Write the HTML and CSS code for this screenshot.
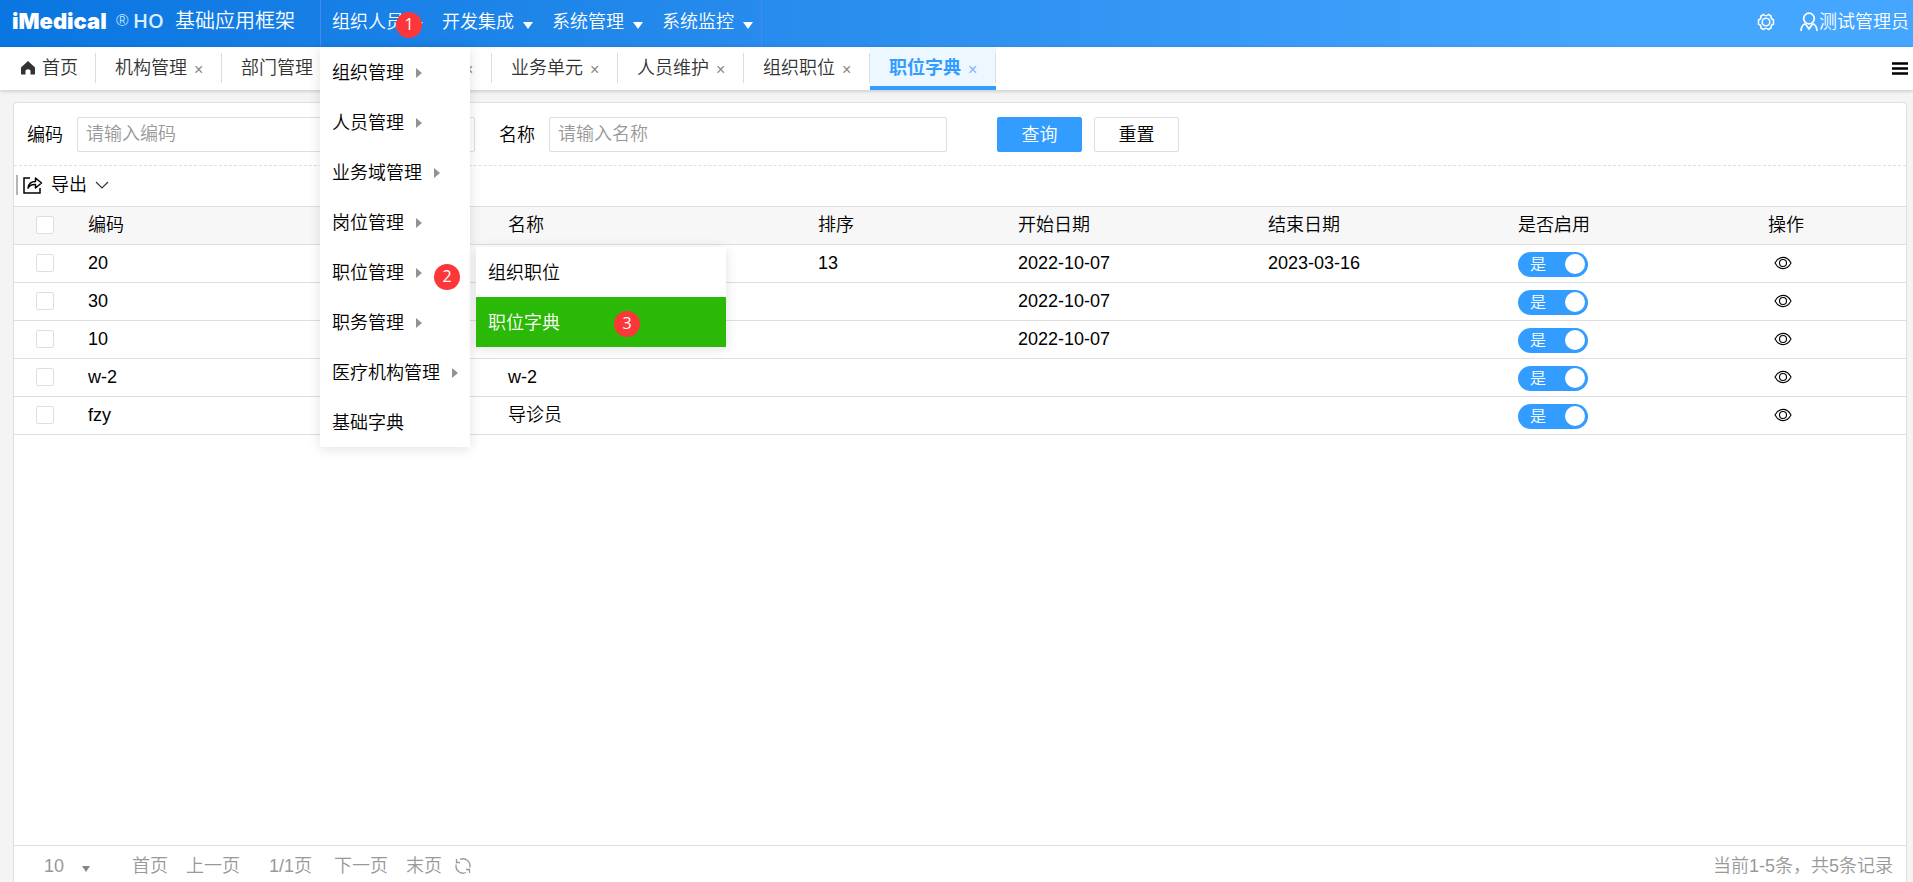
FILE: index.html
```html
<!DOCTYPE html>
<html lang="zh-CN">
<head>
<meta charset="utf-8">
<title>基础应用框架</title>
<link rel="stylesheet" href="styles.css">
</head>
<body>
<svg class="sprite" aria-hidden="true">
  <symbol id="eye" viewBox="0 0 18 16">
    <path d="M1 8C5 .5 13 .5 17 8C13 15.500 5 15.500 1 8Z" fill="none" stroke="currentColor" stroke-width="1.100"/>
    <circle cx="9" cy="8" r="3.500" fill="none" stroke="currentColor" stroke-width="1.100"/>
  </symbol>
</svg>
<header class="topbar">
  <div class="brand">
    <span class="brand-name">iMedical</span><span class="brand-mark">®</span><span class="brand-ho">HO</span>
    <span class="brand-title">基础应用框架</span>
  </div>
  <nav class="main-menu">
    <div class="main-item">
      <button type="button" class="main-link">组织人员<span class="caret"></span></button>
      <span class="badge badge-one">1</span>
      <ul class="drop">
        <li><a href="#">组织管理<span class="arrow"></span></a></li>
        <li><a href="#">人员管理<span class="arrow"></span></a></li>
        <li><a href="#">业务域管理<span class="arrow"></span></a></li>
        <li><a href="#">岗位管理<span class="arrow"></span></a></li>
        <li class="open"><a href="#">职位管理<span class="arrow"></span></a>
          <span class="badge badge-two">2</span>
          <ul class="subdrop">
            <li><a href="#">组织职位</a></li>
            <li><a href="#" class="chosen">职位字典</a><span class="badge badge-three">3</span></li>
          </ul>
        </li>
        <li><a href="#">职务管理<span class="arrow"></span></a></li>
        <li><a href="#">医疗机构管理<span class="arrow"></span></a></li>
        <li><a href="#">基础字典</a></li>
      </ul>
    </div>
    <div class="main-item"><button type="button" class="main-link">开发集成<span class="caret"></span></button></div>
    <div class="main-item"><button type="button" class="main-link">系统管理<span class="caret"></span></button></div>
    <div class="main-item"><button type="button" class="main-link">系统监控<span class="caret"></span></button></div>
  </nav>
  <div class="account">
    <button type="button" class="plain" aria-label="设置">
      <svg width="18" height="18" viewBox="0 0 18 18" fill="none" stroke="currentColor" stroke-width="1.500"><path d="M6.500 1.500Q9 4 11.500 1.500L14 3Q13.500 6 16.500 7V11Q13.500 12 14 15L11.500 16.500Q9 14 6.500 16.500L4 15Q4.500 12 1.500 11V7Q4.500 6 4 3Z"/><circle cx="9" cy="9" r="3.800"/></svg>
    </button>
    <button type="button" class="plain user">
      <svg width="18" height="20" viewBox="0 0 18 20" fill="none" stroke="currentColor" stroke-width="1.700"><circle cx="9" cy="6.500" r="5.300"/><path d="M1 19Q1 13.500 5.500 11.500M17 19Q17 13.500 12.500 11.500M5.500 12L9 17L12.500 12"/></svg>
      <span>测试管理员</span>
    </button>
  </div>
</header>
<nav class="tabs">
  <a href="#" class="tab home"><svg width="14" height="14" viewBox="0 0 14 14"><path d="M7 0L0 6.500V13.500H4.500V9.500Q7 7 9.500 9.500V13.500H14V6.500Z" fill="#333"/></svg>首页</a>
  <a href="#" class="tab">机构管理<span class="close">×</span></a>
  <a href="#" class="tab">部门管理<span class="close">×</span></a>
  <a href="#" class="tab">组织业务域<span class="close">×</span></a>
  <a href="#" class="tab">业务单元<span class="close">×</span></a>
  <a href="#" class="tab">人员维护<span class="close">×</span></a>
  <a href="#" class="tab">组织职位<span class="close">×</span></a>
  <a href="#" class="tab active">职位字典<span class="close">×</span></a>
  <button type="button" class="plain burger" aria-label="标签列表"><svg width="16" height="14" viewBox="0 0 16 14"><path d="M0 1.500H16M0 6.500H16M0 11.500H16" stroke="#000" stroke-width="2.500"/></svg></button>
</nav>
<main class="panel">
  <form class="search">
    <label for="code">编码</label>
    <input id="code" class="field" type="text" placeholder="请输入编码">
    <label for="name" class="second">名称</label>
    <input id="name" class="field" type="text" placeholder="请输入名称">
    <button type="button" class="btn primary">查询</button>
    <button type="button" class="btn">重置</button>
  </form>
  <div class="toolbar">
    <button type="button" class="plain export">
      <svg width="20" height="18" viewBox="0 0 20 18" fill="none" stroke="#000" stroke-width="1.500"><path d="M7 2H1V17H17V12"/><path d="M5 12Q6 5.500 12.500 5.500V2L18.500 7L12.500 12V8.500Q7.500 8 5 12Z" stroke-linejoin="round"/></svg>
      导出
      <svg width="14" height="8" viewBox="0 0 14 8" fill="none" stroke="#333" stroke-width="1.200"><path d="M1 1L7 7L13 1"/></svg>
    </button>
  </div>
  <table class="grid">
    <colgroup><col class="c-check"><col class="c-code"><col class="c-name"><col class="c-sort"><col class="c-date"><col class="c-date"><col class="c-date"><col></colgroup>
    <thead>
      <tr><th><input type="checkbox" class="check" aria-label="全选"></th><th>编码</th><th>名称</th><th>排序</th><th>开始日期</th><th>结束日期</th><th>是否启用</th><th>操作</th></tr>
    </thead>
    <tbody>
      <tr><td><input type="checkbox" class="check" aria-label="20"></td><td>20</td><td></td><td>13</td><td>2022-10-07</td><td>2023-03-16</td><td><label class="switch"><input type="checkbox" checked><span>是</span></label></td><td><button type="button" class="plain eye" aria-label="查看"><svg width="18" height="16"><use href="#eye"/></svg></button></td></tr>
      <tr><td><input type="checkbox" class="check" aria-label="30"></td><td>30</td><td></td><td></td><td>2022-10-07</td><td></td><td><label class="switch"><input type="checkbox" checked><span>是</span></label></td><td><button type="button" class="plain eye" aria-label="查看"><svg width="18" height="16"><use href="#eye"/></svg></button></td></tr>
      <tr><td><input type="checkbox" class="check" aria-label="10"></td><td>10</td><td></td><td></td><td>2022-10-07</td><td></td><td><label class="switch"><input type="checkbox" checked><span>是</span></label></td><td><button type="button" class="plain eye" aria-label="查看"><svg width="18" height="16"><use href="#eye"/></svg></button></td></tr>
      <tr><td><input type="checkbox" class="check" aria-label="w-2"></td><td>w-2</td><td>w-2</td><td></td><td></td><td></td><td><label class="switch"><input type="checkbox" checked><span>是</span></label></td><td><button type="button" class="plain eye" aria-label="查看"><svg width="18" height="16"><use href="#eye"/></svg></button></td></tr>
      <tr><td><input type="checkbox" class="check" aria-label="fzy"></td><td>fzy</td><td>导诊员</td><td></td><td></td><td></td><td><label class="switch"><input type="checkbox" checked><span>是</span></label></td><td><button type="button" class="plain eye" aria-label="查看"><svg width="18" height="16"><use href="#eye"/></svg></button></td></tr>
    </tbody>
  </table>
  <footer class="pager">
    <div class="size"><select aria-label="每页条数"><option>10</option></select><span class="size-caret"></span></div>
    <button type="button" class="plain">首页</button>
    <button type="button" class="plain prev">上一页</button>
    <span class="current">1/1页</span>
    <button type="button" class="plain next">下一页</button>
    <button type="button" class="plain last">末页</button>
    <button type="button" class="plain refresh" aria-label="刷新"><svg width="16" height="16" viewBox="0 0 16 16" fill="none" stroke="currentColor" stroke-width="1.300"><path d="M5 1.500A7 7 0 0 1 15 8V9.500M11 14.500A7 7 0 0 1 1 8V6.500M1.500 1V4.500H5M14.500 15V11.500H11"/></svg></button>
    <span class="total">当前1-5条，共5条记录</span>
  </footer>
</main>
</body>
</html>
```
FILE: styles.css
```css
* { box-sizing: border-box; }
body {
  margin: 0;
  height: 100vh;
  display: flex;
  flex-direction: column;
  overflow: hidden;
  background: #f4f4f4;
  color: #000;
  font: 350 18px/24px "Liberation Sans", "Noto Sans CJK SC", sans-serif;
}
button, input, select { font: inherit; color: inherit; }
a { color: inherit; text-decoration: none; }
ul { list-style: none; margin: 0; padding: 0; }
svg { display: block; flex: none; }
.sprite { position: absolute; width: 0; height: 0; }
.plain { border: 0; background: none; padding: 0; display: flex; align-items: center; white-space: nowrap; }

.topbar {
  flex: none;
  height: 47px;
  display: flex;
  color: #fff;
  background: linear-gradient(90deg, #0a76e1, #2a8eee 45%, #45a6ff 85%, #45a6ff);
}
.brand { width: 320px; padding: 0 0 5px 12px; display: flex; align-items: center; white-space: nowrap; flex: none; }
.brand-name { width: 104px; font: 900 22px/36px Inter, sans-serif; }
.brand-mark { width: 17px; font-size: 17px; line-height: 28px; color: #b5dcff; }
.brand-ho { width: 42px; font: 600 20px/36px "Open Sans", sans-serif; color: #d9edff; }
.brand-title { font-size: 20px; line-height: 36px; }
.main-menu { display: flex; border: solid #4589f4; border-width: 0 1px; flex: none; }
.main-item { position: relative; width: 110px; }
.main-link {
  width: 100%;
  height: 47px;
  padding: 0 8px 3px 11px;
  border: 0;
  background: none;
  display: flex;
  align-items: center;
  justify-content: space-between;
  white-space: nowrap;
}
.caret { margin-top: 6px; border: solid transparent; border-width: 7px 5px 0; border-top-color: #fff; }
.account { margin-left: auto; padding: 0 4px 3px 0; display: flex; align-items: center; gap: 25px; }
.user { gap: 1px; }

.badge {
  position: absolute;
  width: 26px;
  height: 26px;
  border-radius: 50%;
  background: #fd3739;
  color: #fff;
  text-align: center;
  font: 400 16px/24px "Open Sans", sans-serif;
}
.badge-one { left: 75px; top: 12px; }
.badge-two { left: 114px; top: 17px; }
.badge-three { left: 138px; top: 14px; }

.drop, .subdrop { position: absolute; z-index: 2; background: #fff; color: #000; box-shadow: 0 2px 12px rgba(0, 0, 0, .12); }
.drop { left: -1px; top: 47px; width: 150px; }
.subdrop { left: 156px; top: 0; width: 250px; }
.drop li { position: relative; }
.drop a { height: 50px; padding: 2px 12px 0; display: flex; align-items: center; gap: 12px; white-space: nowrap; }
.drop .chosen { background: #29b906; color: #fff; }
.arrow { border: solid transparent; border-width: 5px 0 5px 6px; border-left-color: #909399; }

.tabs { flex: none; height: 43px; display: flex; align-items: center; background: #fff; color: #333; box-shadow: 0 1px 4px rgba(0, 0, 0, .2); }
.tab { position: relative; height: 43px; padding: 0 20px 2px 19px; display: flex; align-items: center; gap: 7px; white-space: nowrap; }
.tab::after { content: ""; position: absolute; right: 0; top: 6px; width: 1px; height: 30px; background: #ddd; }
.tab.home { padding-right: 18px; padding-left: 21px; }
.close { width: 8px; text-align: center; font-size: 16px; line-height: 16px; color: #888; margin-top: 4px; }
.active { background: #ecf7ff; color: #339dff; font-weight: 700; border-bottom: 4px solid #339dff; padding: 2px 20px 0 19px; }
.active .close { font-weight: 350; color: #7fb4f5; }
.burger { margin: 0 5px 0 auto; }

.panel {
  flex: 1;
  min-height: 0;
  margin: 12px 6px 0 13px;
  display: flex;
  flex-direction: column;
  background: #fff;
  border: 1px solid #dfdfdf;
  border-bottom: 0;
  border-radius: 4px 4px 0 0;
}
.search { display: flex; align-items: center; padding: 14px 14px 13px 13px; border-bottom: 1px dashed #dfdfdf; }
.search label { white-space: nowrap; }
.search .second { margin-left: 24px; }
.field { flex: 0 1 398px; min-width: 0; height: 35px; margin-left: 14px; padding: 0 8px; border: 1px solid #dcdfe6; border-radius: 2px; background: #fff; }
.field::placeholder { color: #999; opacity: 1; }
.btn { width: 85px; height: 35px; margin-left: 12px; padding: 0; border: 1px solid #dcdfe6; border-radius: 2px; background: #fff; }
.primary { margin-left: 50px; background: #339dff; border-color: #339dff; color: #fff; }
.toolbar { height: 40px; display: flex; align-items: center; padding: 0 0 2px 2px; }
.export { height: 20px; padding-left: 5px; gap: 8px; border-left: 2px solid #b5b5b5; }

.grid { width: 100%; table-layout: fixed; border-collapse: separate; border-spacing: 0; border-top: 1px solid #dfdfdf; }
.grid th, .grid td { height: 38px; padding: 0 10px 2px; border-bottom: 1px solid #dfdfdf; text-align: left; font-weight: 350; vertical-align: middle; }
.grid th { background: #f7f7f7; }
.grid th:first-child, .grid td:first-child { padding-left: 22px; }
.c-check { width: 64px; }
.c-code { width: 420px; }
.c-name { width: 310px; }
.c-sort { width: 200px; }
.c-date { width: 250px; }
.check { appearance: none; display: block; width: 18px; height: 18px; margin: 0; border: 1px solid #dcdfe6; border-radius: 2px; background: #fff; }
.switch { display: block; position: relative; width: 70px; height: 25px; margin-top: 4px; }
.switch input { appearance: none; display: block; width: 70px; height: 25px; margin: 0; border-radius: 13px; background: #339dff; }
.switch input::after { content: ""; position: absolute; right: 3px; top: 2px; width: 20px; height: 20px; border-radius: 50%; background: #fff; }
.switch span { position: absolute; left: 12px; top: 1px; font-size: 16px; color: #fff; }
.eye { margin-left: 6px; }

.pager { margin-top: auto; height: 37px; padding: 4px 13px 0 30px; display: flex; align-items: center; border-top: 1px solid #dfdfdf; color: #999; white-space: nowrap; }
.size { position: relative; width: 60px; margin-right: 28px; }
.size select { appearance: none; width: 60px; border: 0; background: none; padding: 0; }
.size-caret { position: absolute; right: 14px; top: 12px; border: solid transparent; border-width: 6px 4px 0; border-top-color: #888; }
.prev { margin-left: 18px; }
.current { margin-left: 29px; }
.next { margin-left: 22px; }
.last { margin-left: 18px; }
.refresh { margin-left: 13px; }
.total { margin-left: auto; }
```
